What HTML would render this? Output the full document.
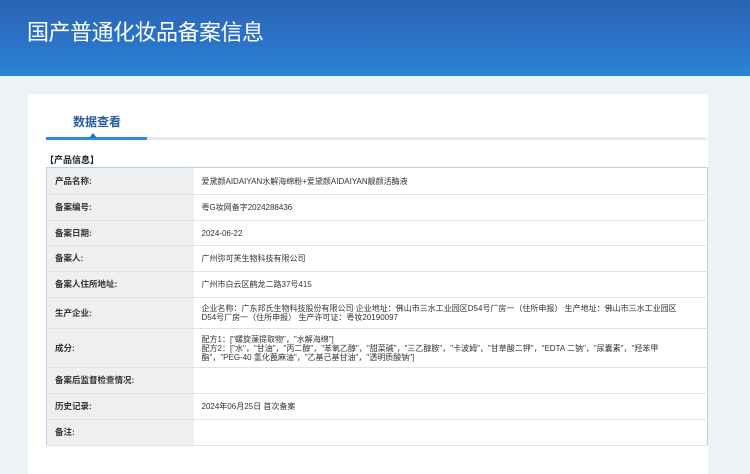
<!DOCTYPE html><html><head><meta charset="utf-8"><style>
*{margin:0;padding:0;box-sizing:border-box}
body{width:750px;height:462px;overflow:hidden;background:#eef2f5;font-family:"Liberation Sans","Noto Sans CJK SC",sans-serif;position:relative}
.hd{position:absolute;left:0;top:0;width:750px;height:76px;background:linear-gradient(180deg,#2c63b4 0%,#2a78cc 70%,#2a86d6 100%);overflow:hidden}
.hd h1{position:absolute;left:27px;top:15px;font-size:22px;font-weight:normal;color:#fff;letter-spacing:-0.5px}
.card{position:absolute;left:28px;top:94px;width:680px;height:380px;background:#fff}
.tab{position:absolute;left:73px;top:113px;font-size:12px;color:#2a5aa0;font-weight:bold}
.line{position:absolute;left:46px;top:137px;width:661px;height:3px;background:#e6e8eb}
.line b{position:absolute;left:0;top:0;width:101px;height:3px;background:#2b8be0}
.tri{position:absolute;left:89px;top:133px;width:0;height:0;border-left:4px solid transparent;border-right:4px solid transparent;border-bottom:5px solid #2b6ed0}
.sec{position:absolute;left:45px;top:153px;font-size:9px;font-weight:bold;color:#222}
table{position:absolute;left:46px;top:167px;width:662px;border-collapse:collapse;border:1px solid #b9d0ec;font-size:8px;color:#333;table-layout:fixed}
td{border-bottom:1px solid #dde3ea;padding:0 20px 0 8px;vertical-align:middle;line-height:9px;overflow:hidden}
td.l{background:#eeeff1;font-weight:bold;color:#333;font-size:8.5px;padding:0 8px}
.nw{white-space:nowrap}
</style></head><body>
<div class="hd"><h1>国产普通化妆品备案信息</h1></div>
<div class="card"></div>
<div class="tab">数据查看</div>
<div class="line"><b></b></div><div class="tri"></div>
<div class="sec">【产品信息】</div>
<table>
<colgroup><col style="width:147px"><col></colgroup>
<tr style="height:27px"><td class="l">产品名称:</td><td>爱黛颜AIDAIYAN水解海绵粉+爱黛颜AIDAIYAN靓颜活酶液</td></tr>
<tr style="height:26px"><td class="l">备案编号:</td><td>粤G妆网备字2024288436</td></tr>
<tr style="height:25px"><td class="l">备案日期:</td><td>2024-06-22</td></tr>
<tr style="height:26px"><td class="l">备案人:</td><td>广州弥可芙生物科技有限公司</td></tr>
<tr style="height:26px"><td class="l">备案人住所地址:</td><td>广州市白云区鹤龙二路37号415</td></tr>
<tr style="height:31px"><td class="l">生产企业:</td><td class="nw">企业名称：广东邦氏生物科技股份有限公司 企业地址：佛山市三水工业园区D54号厂房一（住所申报） 生产地址：佛山市三水工业园区<br>D54号厂房一（住所申报） 生产许可证：粤妆20190097</td></tr>
<tr style="height:39px"><td class="l">成分:</td><td class="nw">配方1：["螺旋藻提取物"，"水解海绵"]<br>配方2：["水"，"甘油"，"丙二醇"，"苯氧乙醇"，"甜菜碱"，"三乙醇胺"，"卡波姆"，"甘草酸二钾"，"EDTA 二钠"，"尿囊素"，"羟苯甲<br>酯"，"PEG-40 氢化蓖麻油"，"乙基己基甘油"，"透明质酸钠"]</td></tr>
<tr style="height:26px"><td class="l">备案后监督检查情况:</td><td></td></tr>
<tr style="height:26px"><td class="l">历史记录:</td><td>2024年06月25日 首次备案</td></tr>
<tr style="height:26px"><td class="l">备注:</td><td></td></tr>
</table>
</body></html>
